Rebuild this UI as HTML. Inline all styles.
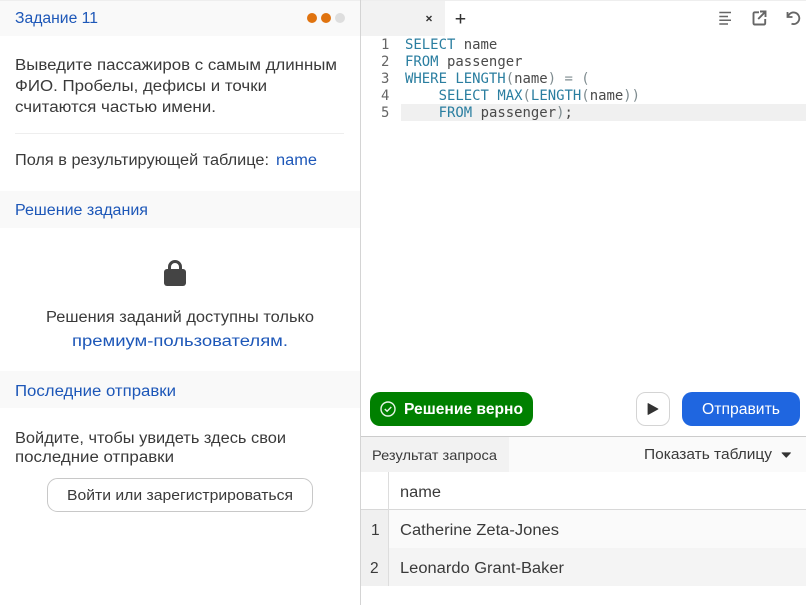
<!DOCTYPE html>
<html lang="ru"><head><meta charset="utf-8"><title>Задание 11</title>
<style>
html,body{margin:0;padding:0;background:#fff;width:806px;height:605px;overflow:hidden}
svg{display:block;position:absolute;left:0;top:0}
text{font-family:"Liberation Sans","DejaVu Sans",sans-serif;fill:#3a3a3a;font-size:15.5px}
.b{fill:#1d57b8}
.m{font-family:"DejaVu Sans Mono","Liberation Mono",monospace;font-size:13.94px;fill:#4a4a4a}
.k{fill:#2a7ea0}
.g{fill:#7f8c90}
.n{fill:#666}
</style></head><body>
<svg width="806" height="605" viewBox="0 0 806 605" xmlns="http://www.w3.org/2000/svg">
<rect x="0" y="0" width="360" height="36" fill="#f9f9f9"/>
<rect x="0" y="0" width="806" height="1" fill="#eee"/>
<rect x="0" y="191" width="360" height="37" fill="#f9f9f9"/>
<rect x="0" y="371" width="360" height="37" fill="#f9f9f9"/>
<rect x="15" y="133" width="329" height="1" fill="#eee"/>
<rect x="360" y="0" width="1" height="605" fill="#d4d4d4"/>

<text class="b" x="15" y="23" textLength="83" lengthAdjust="spacingAndGlyphs">Задание 11</text>
<circle cx="312" cy="18" r="5" fill="#e0730f"/><circle cx="326" cy="18" r="5" fill="#e0730f"/><circle cx="340" cy="18" r="5" fill="#dedede"/>
<text x="15" y="70" textLength="322" lengthAdjust="spacingAndGlyphs">Выведите пассажиров с самым длинным</text>
<text x="15" y="91" textLength="252" lengthAdjust="spacingAndGlyphs">ФИО. Пробелы, дефисы и точки</text>
<text x="15" y="112" textLength="201" lengthAdjust="spacingAndGlyphs">считаются частью имени.</text>
<text x="15" y="165" textLength="254" lengthAdjust="spacingAndGlyphs">Поля в результирующей таблице:</text>
<text class="b" x="276" y="165" textLength="41" lengthAdjust="spacingAndGlyphs">name</text>
<text class="b" x="15" y="215" textLength="133" lengthAdjust="spacingAndGlyphs">Решение задания</text>

<path d="M169.500 271v-4a5.500 5.500 0 0 1 11 0v4" fill="none" stroke="#444" stroke-width="3"/>
<rect x="164" y="269" width="22" height="17" rx="3" fill="#444"/>

<text x="46" y="322" textLength="268" lengthAdjust="spacingAndGlyphs">Решения заданий доступны только</text>
<text class="b" x="72" y="346" textLength="216" lengthAdjust="spacingAndGlyphs">премиум-пользователям.</text>
<text class="b" x="15" y="396" textLength="161" lengthAdjust="spacingAndGlyphs">Последние отправки</text>
<text x="15" y="443" textLength="271" lengthAdjust="spacingAndGlyphs">Войдите, чтобы увидеть здесь свои</text>
<text x="15" y="462" textLength="159" lengthAdjust="spacingAndGlyphs">последние отправки</text>
<rect x="47.500" y="478.500" width="265" height="33" rx="10" fill="#fff" stroke="#c8c8c8"/>
<text x="67" y="500" style="font-size:14.500px" textLength="226" lengthAdjust="spacingAndGlyphs">Войти или зарегистрироваться</text>

<rect x="361" y="1" width="84" height="35" fill="#f2f2f2"/>
<path d="M426.500 16l5 5M431.500 16l-5 5" stroke="#333" stroke-width="1.400" fill="none"/>
<path d="M460.500 14v9.500M455.700 18.700h9.500" stroke="#333" stroke-width="1.500" fill="none"/>
<path d="M719.300 12.500H731M719.300 16.500H728M719.300 20.200H731M719.300 24H728" stroke="#666" stroke-width="1.500" fill="none"/>
<path d="M759 12.300h-4.300a1.200 1.200 0 0 0-1.200 1.200v9.800a1.200 1.200 0 0 0 1.200 1.200h9.300a1.200 1.200 0 0 0 1.200-1.200V19M760 11.500h5.500V17M765.300 11.800L758.200 19" stroke="#666" stroke-width="1.900" fill="none"/>
<path d="M787.500 12v5h5M788 16.500A5.800 5.800 0 1 1 791.500 23.700" stroke="#666" stroke-width="1.800" fill="none"/>

<rect x="401" y="104" width="405" height="17" fill="#f0f0f0"/>
<text class="m n" x="381" y="49">1</text><text class="m n" x="381" y="66">2</text><text class="m n" x="381" y="83">3</text><text class="m n" x="381" y="100">4</text><text class="m n" x="381" y="117">5</text>
<text class="m" x="405" y="49"><tspan class="k">SELECT</tspan> name</text>
<text class="m" x="405" y="66"><tspan class="k">FROM</tspan> passenger</text>
<text class="m" x="405" y="83"><tspan class="k">WHERE LENGTH</tspan><tspan class="g">(</tspan>name<tspan class="g">) = (</tspan></text>
<text class="m" x="438.600" y="100"><tspan class="k">SELECT MAX</tspan><tspan class="g">(</tspan><tspan class="k">LENGTH</tspan><tspan class="g">(</tspan>name<tspan class="g">))</tspan></text>
<text class="m" x="438.600" y="117"><tspan class="k">FROM</tspan> passenger<tspan class="g">)</tspan>;</text>

<rect x="370" y="392" width="163" height="34" rx="10" fill="#008000"/>
<circle cx="388" cy="409" r="7" fill="none" stroke="#e8f5e8" stroke-width="1.400"/>
<path d="M384.800 409l2.300 2.300 4.200-4.300" fill="none" stroke="#e8f5e8" stroke-width="1.400"/>
<text x="404" y="414" style="fill:#fff;font-size:15.500px;font-weight:bold" textLength="119" lengthAdjust="spacingAndGlyphs">Решение верно</text>
<rect x="636.500" y="392.500" width="33" height="33" rx="9" fill="#fff" stroke="#d4d4d4"/>
<path d="M648 403.500l10 5.500-10 5.500z" fill="#333" stroke="#333" stroke-width=".8" stroke-linejoin="round"/>
<rect x="682" y="392" width="118" height="34" rx="10" fill="#1f66e0"/>
<text x="702" y="414" style="fill:#fff;font-size:15.500px" textLength="78" lengthAdjust="spacingAndGlyphs">Отправить</text>

<rect x="361" y="436" width="445" height="1" fill="#ccc"/>
<rect x="361" y="437" width="445" height="35" fill="#fafafa"/>
<rect x="361" y="437" width="148" height="35" fill="#f2f2f2"/>
<text x="372" y="460" style="font-size:14px" textLength="125" lengthAdjust="spacingAndGlyphs">Результат запроса</text>
<text x="644" y="459" style="font-size:15px" textLength="128" lengthAdjust="spacingAndGlyphs">Показать таблицу</text>
<path d="M782 452.800h8.500l-4.250 4.500z" fill="#333" stroke="#333" stroke-width=".8" stroke-linejoin="round"/>

<rect x="361" y="510" width="445" height="38" fill="#fafafa"/>
<rect x="361" y="548" width="445" height="38" fill="#f4f4f4"/>
<rect x="361" y="510" width="27" height="76" fill="#f0f0f0"/>
<rect x="361" y="509" width="445" height="1" fill="#d8d8d8"/>
<rect x="388" y="472" width="1" height="114" fill="#ddd"/>
<text x="400" y="497" textLength="41" lengthAdjust="spacingAndGlyphs">name</text>
<text x="371" y="535">1</text>
<text x="400" y="535" textLength="159" lengthAdjust="spacingAndGlyphs">Catherine Zeta-Jones</text>
<text x="370" y="573">2</text>
<text x="400" y="573" textLength="164" lengthAdjust="spacingAndGlyphs">Leonardo Grant-Baker</text>
</svg>
</body></html>
